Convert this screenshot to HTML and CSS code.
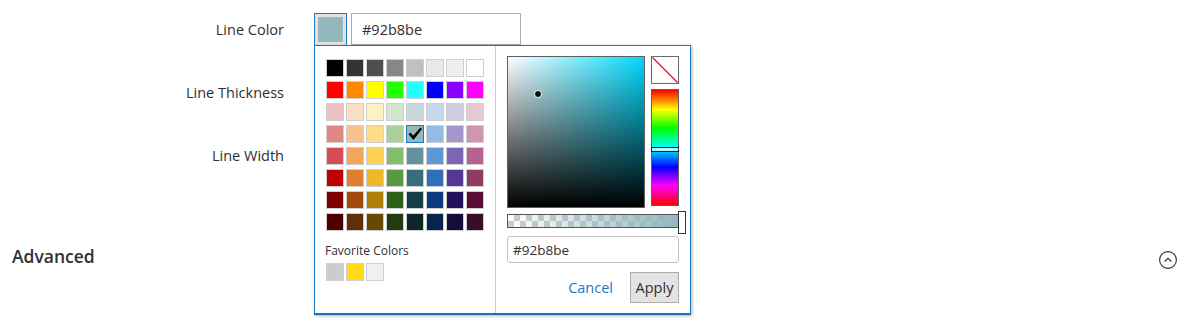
FILE: index.html
```html
<!DOCTYPE html>
<html>
<head>
<meta charset="utf-8">
<link rel="stylesheet" href="styles.css">
</head>
<body>
<div class="page">
<div class="form">
  <div class="field">
    <label class="field-label">Line Color</label>
    <div class="control">
      <button class="swatch-btn"><span class="swatch-chip"></span></button>
      <input class="hex-field" type="text" value="#92b8be">
      <div class="picker">
        <div class="palette-pane">
          <div class="palette">
            <span class="sw" style="background:#000000"></span><span class="sw" style="background:#333333"></span><span class="sw" style="background:#4f4f4f"></span><span class="sw" style="background:#878787"></span><span class="sw" style="background:#c0c0c0"></span><span class="sw" style="background:#e8e8e8"></span><span class="sw" style="background:#efefef"></span><span class="sw" style="background:#ffffff"></span>
            <span class="sw" style="background:#ff0000"></span><span class="sw" style="background:#ff8800"></span><span class="sw" style="background:#ffff00"></span><span class="sw" style="background:#22ff00"></span><span class="sw" style="background:#22ffff"></span><span class="sw" style="background:#0000ff"></span><span class="sw" style="background:#8800ff"></span><span class="sw" style="background:#ff00ff"></span>
            <span class="sw" style="background:#efc0c2"></span><span class="sw" style="background:#fbe0c6"></span><span class="sw" style="background:#fff0c6"></span><span class="sw" style="background:#d4e5cd"></span><span class="sw" style="background:#c6d7db"></span><span class="sw" style="background:#c5daee"></span><span class="sw" style="background:#d1cae3"></span><span class="sw" style="background:#e5c9d4"></span>
            <span class="sw" style="background:#e38585"></span><span class="sw" style="background:#f8c290"></span><span class="sw" style="background:#fedd8a"></span><span class="sw" style="background:#aacf9a"></span><span class="sw sw-selected" style="background:#92b8be"><svg width="16" height="16" viewBox="0 0 16 16"><path d="M1.6 8.2 L3.6 6.6 L6.2 9.8 L13.4 1.6 L15 3 L6.4 14 Z" fill="#000"/></svg></span><span class="sw" style="background:#91bce3"></span><span class="sw" style="background:#a595cc"></span><span class="sw" style="background:#cf95b1"></span>
            <span class="sw" style="background:#d54e53"></span><span class="sw" style="background:#f2a55c"></span><span class="sw" style="background:#fed253"></span><span class="sw" style="background:#85bc6d"></span><span class="sw" style="background:#62939c"></span><span class="sw" style="background:#5f96d5"></span><span class="sw" style="background:#7d65b6"></span><span class="sw" style="background:#b5648d"></span>
            <span class="sw" style="background:#bf0000"></span><span class="sw" style="background:#e07e30"></span><span class="sw" style="background:#eeb82b"></span><span class="sw" style="background:#5a9a3e"></span><span class="sw" style="background:#366f7a"></span><span class="sw" style="background:#2f6eb8"></span><span class="sw" style="background:#553896"></span><span class="sw" style="background:#913a66"></span>
            <span class="sw" style="background:#800000"></span><span class="sw" style="background:#a44a0a"></span><span class="sw" style="background:#b07d08"></span><span class="sw" style="background:#2b6115"></span><span class="sw" style="background:#133e49"></span><span class="sw" style="background:#0d3a7e"></span><span class="sw" style="background:#23115c"></span><span class="sw" style="background:#5a0e36"></span>
            <span class="sw" style="background:#4e0000"></span><span class="sw" style="background:#622f05"></span><span class="sw" style="background:#644a05"></span><span class="sw" style="background:#1f3d0e"></span><span class="sw" style="background:#0c262d"></span><span class="sw" style="background:#08234c"></span><span class="sw" style="background:#160c38"></span><span class="sw" style="background:#3a0c26"></span>
          </div>
          <div class="fav-title">Favorite Colors</div>
          <div class="favorites">
            <span class="sw" style="background:#cccccc"></span><span class="sw" style="background:#ffdb1a"></span><span class="sw" style="background:#f0f0f0"></span>
          </div>
        </div>
        <div class="editor-pane">
          <div class="editor-top">
            <div class="sat-box"><span class="sat-dot"></span></div>
            <div class="side-col">
              <div class="clear-box">
                <svg width="26" height="26" viewBox="0 0 26 26"><line x1="0.5" y1="0.5" x2="25.5" y2="25.5" stroke="#e8101e" stroke-width="1.3"/></svg>
              </div>
              <div class="hue-bar"><span class="hue-marker"></span></div>
            </div>
          </div>
          <div class="alpha-bar"><span class="alpha-handle"></span></div>
          <input class="hex-input" type="text" value="#92b8be">
          <div class="actions">
            <a class="cancel-link">Cancel</a>
            <button class="apply-btn">Apply</button>
          </div>
        </div>
      </div>
    </div>
  </div>
  <div class="field">
    <label class="field-label">Line Thickness</label>
    <div class="control"></div>
  </div>
  <div class="field">
    <label class="field-label">Line Width</label>
    <div class="control"></div>
  </div>
</div>
<div class="section">
  <h3 class="section-title">Advanced</h3>
  <svg class="collapse-icon" width="18" height="18" viewBox="0 0 18 18"><circle cx="9" cy="9" r="8.4" fill="none" stroke="#303030" stroke-width="1.1"/><path d="M5.6 10.6 L9 7.3 L12.4 10.6" fill="none" stroke="#303030" stroke-width="1.3"/></svg>
</div>
</div>
</body>
</html>
```
FILE: styles.css
```css
* { box-sizing: border-box; }
html, body {
  margin: 0;
  min-height: 330px;
  background: #fff;
}
body {
  font-family: "Open Sans", "Noto Sans", sans-serif;
  color: #303030;
}
.page {
  min-height: 330px;
}
.form {
  padding-top: 13px;
  display: flex;
  flex-direction: column;
  gap: 31px;
}
.field {
  display: grid;
  grid-template-columns: 284px 1fr;
  column-gap: 30px;
  align-items: center;
  height: 32px;
}
.field-label {
  text-align: right;
  font-size: 14.5px;
  color: #303030;
}
.control {
  position: relative;
  display: flex;
  align-items: flex-start;
  height: 32px;
}
.swatch-btn {
  width: 33px;
  height: 33px;
  padding: 3px;
  margin: 0;
  border: 1px solid #1979c3;
  background: #e3e3e3;
  display: block;
}
.swatch-chip {
  display: block;
  width: 25px;
  height: 25px;
  background: #92b8be;
  border: 1px solid #9fb7bb;
}
.hex-field {
  margin: 0 0 0 4px;
  width: 170px;
  height: 32px;
  border: 1px solid #adadad;
  padding: 0 10px;
  font-family: "Open Sans", sans-serif;
  font-size: 14.5px;
  color: #303030;
  outline: none;
}
.picker {
  position: absolute;
  top: 32px;
  left: 0;
  width: 377px;
  height: 270px;
  border: 1px solid #1979c3;
  border-bottom: 2px solid #1f6fb5;
  background: #fff;
  box-shadow: 1px 1px 3px rgba(0,0,0,0.3);
  display: flex;
  z-index: 5;
}
.palette-pane {
  width: 181px;
  border-right: 1px solid #cccccc;
  padding: 13px 0 0 11px;
}
.palette {
  display: grid;
  grid-template-columns: repeat(8, 18px);
  grid-auto-rows: 18px;
  column-gap: 2px;
  row-gap: 4px;
}
.sw {
  display: block;
  width: 18px;
  height: 18px;
  border: 1px solid #cfcfcf;
}
.sw-selected {
  border-color: #1979c3;
}
.sw-selected svg { display: block; }
.fav-title {
  margin-top: 12px;
  font-size: 12px;
  line-height: 16px;
  color: #303030;
  margin-left: -1px;
}
.favorites {
  margin-top: 4px;
  display: flex;
  gap: 2px;
}
.editor-pane {
  width: 193px;
  padding: 10px 0 0 11px;
  display: flex;
  flex-direction: column;
}
.editor-top {
  display: flex;
  gap: 6px;
}
.sat-box {
  position: relative;
  width: 138px;
  height: 152px;
  border: 1px solid #5e5e5e;
  background:
    linear-gradient(to top, #000, rgba(0,0,0,0)),
    linear-gradient(to right, #fff, hsl(189, 100%, 50%));
}
.sat-dot {
  position: absolute;
  left: 26px;
  top: 33px;
  width: 8px;
  height: 8px;
  border-radius: 50%;
  background: #000;
  border: 1px solid #fff;
}
.side-col {
  display: flex;
  flex-direction: column;
  gap: 5px;
  width: 28px;
}
.clear-box {
  width: 28px;
  height: 28px;
  border: 1px solid #6a6a6a;
  background: #fff;
}
.clear-box svg { display: block; }
.hue-bar {
  position: relative;
  width: 28px;
  height: 117px;
  border: 1px solid #5e5e5e;
  background: linear-gradient(to bottom, #f00 0%, #ff0 17%, #0f0 33%, #0ff 50%, #00f 67%, #f0f 83%, #f00 100%);
}
.hue-marker {
  position: absolute;
  left: -1px;
  right: -1px;
  top: 57px;
  height: 5px;
  border: 1px solid #222;
  background: rgba(255,255,255,0.7);
}
.alpha-bar {
  position: relative;
  margin-top: 6px;
  width: 172px;
  height: 14px;
  border: 1px solid #555;
  background:
    linear-gradient(to right, rgba(146,184,190,0), #92b8be),
    repeating-conic-gradient(#cccccc 0 25%, #ffffff 0 50%) 0 0 / 12px 12px;
}
.alpha-handle {
  position: absolute;
  left: 170px;
  top: -4px;
  width: 8px;
  height: 23px;
  background: #fff;
  border: 1px solid #333;
}
.hex-input {
  margin: 8px 0 0 0;
  width: 172px;
  height: 27px;
  border: 1px solid #c2c2c2;
  border-radius: 3px;
  padding: 0 5px;
  font-family: "Open Sans", sans-serif;
  font-size: 13.5px;
  color: #303030;
  outline: none;
}
.actions {
  margin-top: 9px;
  width: 172px;
  display: flex;
  justify-content: flex-end;
  align-items: center;
  gap: 17px;
}
.cancel-link {
  font-size: 14.5px;
  color: #1979c3;
  cursor: pointer;
}
.apply-btn {
  width: 49px;
  height: 31px;
  margin: 0;
  padding: 0;
  border: 1px solid #adadad;
  background: #e3e3e3;
  font-family: "Open Sans", sans-serif;
  font-size: 14.5px;
  color: #303030;
}
.section {
  margin-top: 73px;
  display: flex;
  justify-content: space-between;
  align-items: flex-start;
  padding: 0 10px 0 12px;
}
.section-title {
  margin: 0;
  font-size: 17.5px;
  line-height: 24px;
  font-weight: 600;
  color: #303030;
}
.collapse-icon {
  display: block;
  margin-top: 7px;
}
```
